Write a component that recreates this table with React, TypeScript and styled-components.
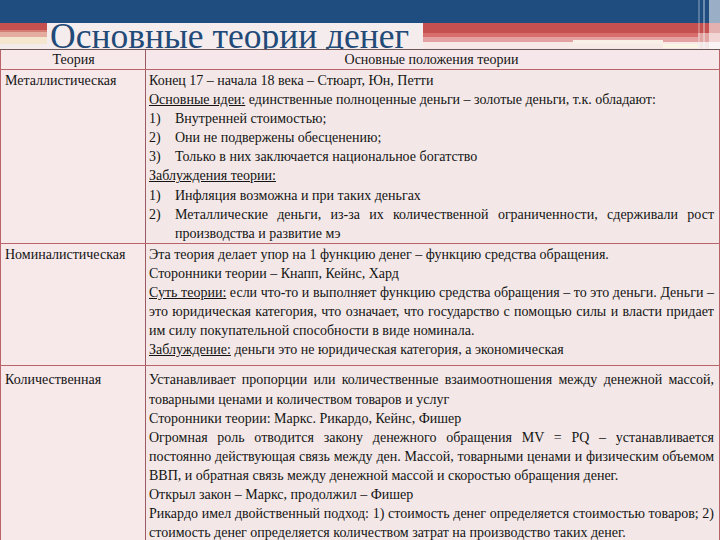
import React from "react";
import styled, { createGlobalStyle } from "styled-components";

const SERIF = `"Liberation Serif", "Times New Roman", serif`;

const GlobalStyle = createGlobalStyle`
  html, body {
    margin: 0;
    padding: 0;
  }
  body {
    width: 720px;
    height: 540px;
    overflow: hidden;
    background: #f3e7e7;
    font-family: ${SERIF};
    color: #141414;
  }
`;

const Slide = styled.div`
  width: 720px;
  height: 540px;
  overflow: hidden;
  display: flex;
  flex-direction: column;
  background: #f3e7e7;
  font-family: ${SERIF};
`;

const Header = styled.div`
  display: flex;
  height: 49px;
  flex-shrink: 0;
`;

const HeaderMain = styled.div`
  flex: 1;
  display: flex;
  flex-direction: column;
`;

const BlueBar = styled.div`
  height: 23px;
  background: #1f4d80;
`;

const TitleRow = styled.div`
  height: 26px;
  display: flex;
`;

const LeftStripes = styled.div`
  width: 47px;
  background: linear-gradient(
    to bottom,
    #c4504f 0 7px,
    #d47d74 7px 9px,
    #e4ad9f 9px 14px,
    #f4e6cf 14px 21px,
    #f4ecea 21px
  );
`;

const RightStripes = styled.div`
  flex: 1;
  background-color: #f3e7e7;
  background-image:
    linear-gradient(to right, transparent 150px, #f8efe7 150px, #f8efe7 240px, transparent 240px),
    linear-gradient(to right, transparent 240px, #fbf4e4 240px, #fbf4e4 275px, transparent 275px),
    linear-gradient(
      to bottom,
      #c4504f 0 10px,
      #d76d6c 10px 14px,
      #e3a2a1 14px 19px,
      #f7eae6 19px 25px,
      #f3e7e7 25px
    );
  background-size: 100% 4px, 100% 4px, 100% 100%;
  background-position: 0 17px, 0 21px, 0 0;
  background-repeat: no-repeat;
`;

const Title = styled.div`
  height: 26px;
  padding: 0 14px 0 3px;
  background: #f5eded;
  font-family: ${SERIF};
  font-size: 35.5px;
  line-height: 26px;
  color: #224a78;
  white-space: nowrap;
`;

const Edge = styled.div`
  width: 22px;
  background-image:
    linear-gradient(
      to right,
      rgba(255, 255, 255, 0.25) 0 2px,
      transparent 2px 5px,
      rgba(255, 255, 255, 0.35) 5px 7px,
      transparent 7px 11px,
      rgba(255, 255, 255, 0.55) 11px
    ),
    linear-gradient(
      to bottom,
      #1f4d80 0 23px,
      #c4504f 23px 33px,
      #e2a3a3 33px 42px,
      #f3e7e7 42px
    );
`;

const Table = styled.div`
  border-top: 1px solid #6e5556;
  display: flex;
  flex-direction: column;
  font-family: ${SERIF};
`;

const Row = styled.div<{ $head?: boolean }>`
  display: grid;
  grid-template-columns: 146px 1fr;
  border-bottom: 1px solid #b9636a;
  font-size: 14px;
  line-height: ${({ $head }) => ($head ? "19px" : "19.1px")};
`;

const NameCell = styled.div<{ $head?: boolean; $top?: number }>`
  padding: ${({ $top }) => $top ?? 0}px 3px 0 4px;
  border-right: 1px solid #9c5a61;
  border-left: 1px solid #b9636a;
  background: #f7e8ea;
  text-align: ${({ $head }) => ($head ? "center" : "left")};
`;

const BodyCell = styled.div<{ $head?: boolean; $top?: number; $bottom?: number }>`
  padding: ${({ $top }) => $top ?? 0}px 5px ${({ $bottom }) => $bottom ?? 0}px 3px;
  border-right: 1px solid #b9636a;
  background: ${({ $head }) => ($head ? "#f6e8ea" : "#f3e8e7")};
  text-align: ${({ $head }) => ($head ? "center" : "left")};
`;

const Item = styled.div`
  display: flex;
`;

const Num = styled.span`
  width: 26px;
  flex-shrink: 0;
`;

const Text = styled.div<{ $justify?: boolean }>`
  flex: 1;
  white-space: nowrap;
  text-align: ${({ $justify }) => ($justify ? "justify" : "left")};
  text-align-last: ${({ $justify }) => ($justify ? "justify" : "left")};
`;

const U = styled.span`
  text-decoration: underline;
`;

type Line = { text: React.ReactNode; justify?: boolean; num?: string };

const metal: Line[] = [
  { text: "Конец 17 – начала 18 века – Стюарт, Юн, Петти" },
  {
    text: (
      <>
        <U>Основные идеи:</U> единственные полноценные деньги – золотые деньги, т.к. обладают:
      </>
    ),
  },
  { num: "1)", text: "Внутренней стоимостью;" },
  { num: "2)", text: "Они не подвержены обесценению;" },
  { num: "3)", text: "Только в них заключается национальное богатство" },
  { text: <U>Заблуждения теории:</U> },
  { num: "1)", text: "Инфляция возможна и при таких деньгах" },
  {
    num: "2)",
    text: "Металлические деньги, из-за их количественной ограниченности, сдерживали рост",
    justify: true,
  },
  { num: "", text: "производства и развитие мэ" },
];

const nominal: Line[] = [
  { text: "Эта теория делает упор на 1 функцию денег – функцию средства обращения." },
  { text: "Сторонники теории – Кнапп, Кейнс, Хард" },
  {
    text: (
      <>
        <U>Суть теории:</U> если что-то и выполняет функцию средства обращения – то это деньги. Деньги –
      </>
    ),
    justify: true,
  },
  {
    text: "это юридическая категория, что означает, что государство с помощью силы и власти придает",
    justify: true,
  },
  { text: "им силу покупательной способности в виде номинала." },
  {
    text: (
      <>
        <U>Заблуждение:</U> деньги это не юридическая категория, а экономическая
      </>
    ),
  },
];

const quantity: Line[] = [
  {
    text: "Устанавливает пропорции или количественные взаимоотношения между денежной массой,",
    justify: true,
  },
  { text: "товарными ценами и количеством товаров и услуг" },
  { text: "Сторонники теории: Маркс. Рикардо, Кейнс, Фишер" },
  {
    text: "Огромная роль отводится закону денежного обращения MV = PQ – устанавливается",
    justify: true,
  },
  {
    text: "постоянно действующая связь между ден. Массой, товарными ценами и физическим объемом",
    justify: true,
  },
  { text: "ВВП, и обратная связь между денежной массой и скоростью обращения денег." },
  { text: "Открыл закон – Маркс, продолжил – Фишер" },
  {
    text: "Рикардо имел двойственный подход: 1) стоимость денег определяется стоимостью товаров; 2)",
    justify: true,
  },
  { text: "стоимость денег определяется количеством затрат на производство таких денег." },
];

const rows = [
  { name: "Металлистическая", lines: metal, top: 1, bottom: 0 },
  { name: "Номиналистическая", lines: nominal, top: 1, bottom: 6 },
  { name: "Количественная", lines: quantity, top: 4, bottom: 0 },
];

function Lines({ lines }: { lines: Line[] }) {
  return (
    <>
      {lines.map((l, i) =>
        l.num !== undefined ? (
          <Item key={i}>
            <Num>{l.num}</Num>
            <Text $justify={l.justify}>{l.text}</Text>
          </Item>
        ) : (
          <Text key={i} $justify={l.justify}>
            {l.text}
          </Text>
        )
      )}
    </>
  );
}

export default function App() {
  return (
    <>
      <GlobalStyle />
      <Slide>
        <Header>
          <HeaderMain>
            <BlueBar />
            <TitleRow>
              <LeftStripes />
              <Title>Основные теории денег</Title>
              <RightStripes />
            </TitleRow>
          </HeaderMain>
          <Edge />
        </Header>
        <Table>
          <Row $head>
            <NameCell $head>Теория</NameCell>
            <BodyCell $head>Основные положения теории</BodyCell>
          </Row>
          {rows.map((r) => (
            <Row key={r.name}>
              <NameCell $top={r.top}>{r.name}</NameCell>
              <BodyCell $top={r.top} $bottom={r.bottom}>
                <Lines lines={r.lines} />
              </BodyCell>
            </Row>
          ))}
        </Table>
      </Slide>
    </>
  );
}
